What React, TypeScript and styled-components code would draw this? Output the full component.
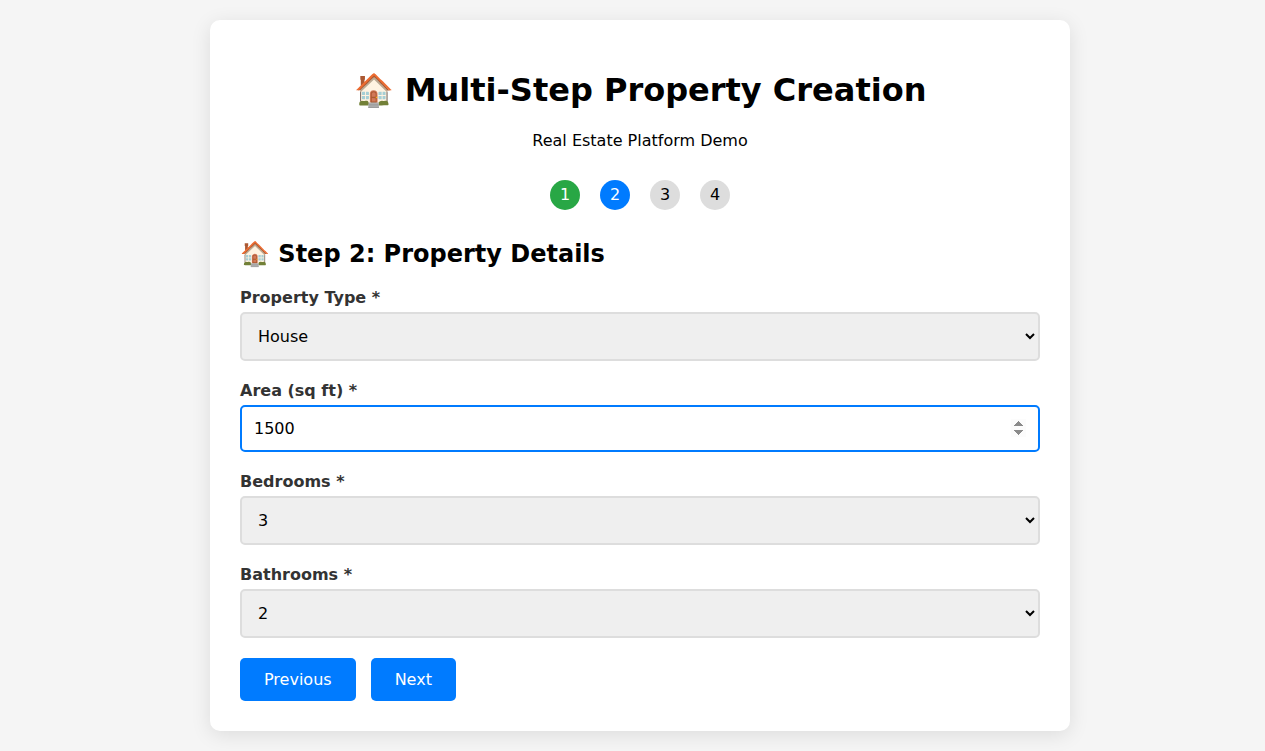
import React, { useState } from "react";
import styled, { createGlobalStyle } from "styled-components";

const GlobalStyle = createGlobalStyle`
  body {
    margin: 0;
    padding: 20px 5px 20px 20px;
    background: #f5f5f5;
    color: #000;
    font-family: "DejaVu Sans", sans-serif;
    font-size: 16px;
  }
`;

const Card = styled.main`
  box-sizing: border-box;
  max-width: 860px;
  margin: 0 auto;
  padding: 30px;
  background: #fff;
  border-radius: 10px;
  box-shadow: 0 4px 20px rgba(0, 0, 0, 0.1);
`;

const Header = styled.header`
  margin-bottom: 30px;
  text-align: center;
`;

const Title = styled.h1`
  margin: 0.67em 0;
  font-size: 32px;
`;

const Subtitle = styled.p`
  margin: 16px 0;
`;

const Steps = styled.div`
  display: flex;
  justify-content: center;
  gap: 20px;
  margin-bottom: 30px;
`;

type StepState = "completed" | "active" | "upcoming";

const stepColors: Record<StepState, string> = {
  completed: "#28a745",
  active: "#007bff",
  upcoming: "#ddd",
};

const Step = styled.div<{ $state: StepState }>`
  display: flex;
  align-items: center;
  justify-content: center;
  width: 30px;
  height: 30px;
  border-radius: 50%;
  background: ${(p) => stepColors[p.$state]};
  color: ${(p) => (p.$state === "upcoming" ? "#000" : "#fff")};
`;

const SectionTitle = styled.h2`
  margin: 0 0 20px;
  font-size: 24px;
`;

const Field = styled.div`
  margin-bottom: 20px;
`;

const Label = styled.label`
  display: block;
  margin-bottom: 5px;
  font-weight: bold;
  color: #333;
`;

const Select = styled.select`
  display: block;
  box-sizing: border-box;
  width: 100%;
  padding: 12px;
  border: 2px solid #ddd;
  border-radius: 5px;
  background: #efefef;
  font: inherit;
`;

const Input = styled.input`
  display: block;
  box-sizing: border-box;
  width: 100%;
  padding: 12px;
  border: 2px solid #ddd;
  border-radius: 5px;
  font: inherit;

  &:focus {
    border-color: #007bff;
    outline: none;
  }
`;

const Actions = styled.div`
  display: flex;
  gap: 15px;
`;

const Button = styled.button`
  padding: 12px 24px;
  border: none;
  border-radius: 5px;
  background: #007bff;
  color: #fff;
  font: inherit;
  cursor: pointer;
`;

export default function App() {
  const [area, setArea] = useState("1500");
  return (
    <>
      <GlobalStyle />
      <Card>
        <Header>
          <Title>🏠 Multi-Step Property Creation</Title>
          <Subtitle>Real Estate Platform Demo</Subtitle>
        </Header>
        <Steps>
          <Step $state="completed">1</Step>
          <Step $state="active">2</Step>
          <Step $state="upcoming">3</Step>
          <Step $state="upcoming">4</Step>
        </Steps>
        <SectionTitle>🏠 Step 2: Property Details</SectionTitle>
        <Field>
          <Label htmlFor="type">Property Type *</Label>
          <Select id="type" defaultValue="House">
            <option>House</option>
            <option>Apartment</option>
          </Select>
        </Field>
        <Field>
          <Label htmlFor="area">Area (sq ft) *</Label>
          <Input id="area" type="number" autoFocus value={area} onChange={(e) => setArea(e.target.value)} />
        </Field>
        <Field>
          <Label htmlFor="bedrooms">Bedrooms *</Label>
          <Select id="bedrooms" defaultValue="3">
            <option>1</option>
            <option>2</option>
            <option>3</option>
          </Select>
        </Field>
        <Field>
          <Label htmlFor="bathrooms">Bathrooms *</Label>
          <Select id="bathrooms" defaultValue="2">
            <option>1</option>
            <option>2</option>
          </Select>
        </Field>
        <Actions>
          <Button type="button">Previous</Button>
          <Button type="button">Next</Button>
        </Actions>
      </Card>
    </>
  );
}
